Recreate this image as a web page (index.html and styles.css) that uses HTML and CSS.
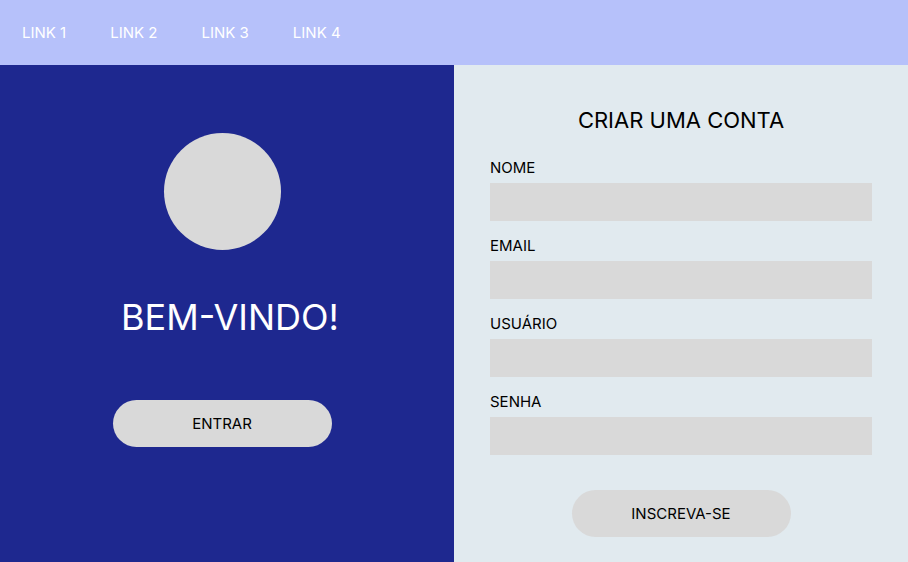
FILE: index.html
```html
<!DOCTYPE html>
<html lang="pt-BR">
<head>
<meta charset="utf-8">
<meta name="viewport" content="width=device-width, initial-scale=1">
<title>Criar uma conta</title>
<link rel="stylesheet" href="styles.css">
</head>
<body>
<nav class="nav">
  <a href="#">LINK 1</a>
  <a href="#">LINK 2</a>
  <a href="#">LINK 3</a>
  <a href="#">LINK 4</a>
</nav>
<main class="main">
  <section class="welcome">
    <div class="avatar"></div>
    <h1 class="welcome-title">BEM-VINDO!</h1>
    <button class="button" type="button">ENTRAR</button>
  </section>
  <section class="signup">
    <h2 class="signup-title">CRIAR UMA CONTA</h2>
    <form class="form">
      <div class="field"><label for="nome">NOME</label><input id="nome" type="text"></div>
      <div class="field"><label for="email">EMAIL</label><input id="email" type="email"></div>
      <div class="field"><label for="usuario">USUÁRIO</label><input id="usuario" type="text"></div>
      <div class="field"><label for="senha">SENHA</label><input id="senha" type="password"></div>
      <button class="button" type="submit">INSCREVA-SE</button>
    </form>
  </section>
</main>
</body>
</html>
```
FILE: styles.css
```css
* {
  box-sizing: border-box;
}

body {
  margin: 0;
  min-height: 100vh;
  display: flex;
  flex-direction: column;
  font-family: Inter, "Liberation Sans", sans-serif;
  font-size: 15px;
  line-height: 18px;
  color: #000;
}

.nav {
  display: flex;
  gap: 44px;
  padding: 24px 22px 23px;
  background: #b6c1fa;
}

.nav a {
  color: #fff;
  text-decoration: none;
}

.main {
  flex: 1;
  display: grid;
  grid-template-columns: 1fr 1fr;
}

.welcome {
  display: flex;
  flex-direction: column;
  align-items: center;
  padding: 68px 10px 24px 0;
  background: #1e288f;
}

.avatar {
  width: 117px;
  height: 117px;
  border-radius: 50%;
  background: #d9d9d9;
}

.welcome-title {
  margin: 44px 0 60px;
  padding-left: 16px;
  font-size: 36px;
  line-height: 46px;
  font-weight: 400;
  color: #fff;
}

.button {
  width: 219px;
  height: 47px;
  padding: 0;
  border: 0;
  border-radius: 24px;
  background: #d9d9d9;
  font: inherit;
  color: inherit;
}

.signup {
  padding: 41px 36px 24px;
  background: #e1eaef;
}

.signup-title {
  margin: 0 0 25px;
  font-size: 22px;
  line-height: 28px;
  font-weight: 400;
  text-align: center;
}

.form {
  display: flex;
  flex-direction: column;
  gap: 16px;
}

.form .button {
  align-self: center;
  margin-top: 19px;
}

.field {
  display: flex;
  flex-direction: column;
  gap: 6px;
}

.field input {
  width: 100%;
  height: 38px;
  padding: 0 12px;
  border: 0;
  border-radius: 0;
  background: #d9d9d9;
  font: inherit;
}
```
